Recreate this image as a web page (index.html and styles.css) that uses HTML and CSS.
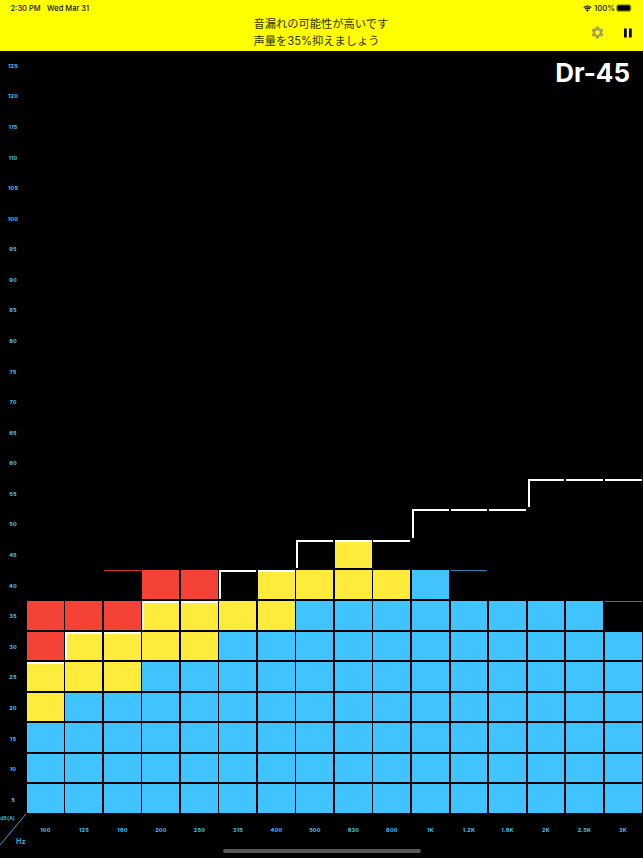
FILE: index.html
```html
<!DOCTYPE html>
<html lang="ja">
<head>
    <meta charset="UTF-8">
    <meta name="viewport" content="width=device-width, initial-scale=1.0">
    <title>Dr-45</title>
    <link rel="stylesheet" href="styles.css">
</head>
<body>
    <header class="header">
        <div class="status-bar">
            <span class="time">2:30 PM</span>
            <span class="date">Wed Mar 31</span>
            <svg class="wifi" viewBox="0 0 18 14">
                <path d="M1.5 5.2a11 11 0 0 1 15 0M4.2 8.3a7 7 0 0 1 9.6 0" fill="none" stroke="#111" stroke-width="2.5"/>
                <path d="M9 13.5L6.2 10.6a4 4 0 0 1 5.6 0z" fill="#111"/>
            </svg>
            <span class="percent">100%</span>
            <svg class="battery" viewBox="0 0 17 8">
                <rect x="0.5" y="0.5" width="14.5" height="7" rx="2" fill="none" stroke="#777700" stroke-width="0.6"/>
                <rect x="1.2" y="1.2" width="13.1" height="5.6" rx="1.2" fill="#000"/>
                <path d="M15.8 2.8q1 1.2 0 2.4z" fill="#666600"/>
            </svg>
        </div>
        <p class="message">音漏れの可能性が高いです<br>声量を35%抑えましょう</p>
        <div class="tools">
            <svg class="gear" viewBox="0 0 24 24">
                <path fill="#a3a05c" fill-rule="evenodd" d="M19.14 12.94c.04-.3.06-.61.06-.94s-.02-.64-.07-.94l2.03-1.58a.49.49 0 0 0 .12-.61l-1.92-3.32a.49.49 0 0 0-.59-.22l-2.39.96a7 7 0 0 0-1.62-.94l-.36-2.54a.48.48 0 0 0-.48-.41h-3.84a.48.48 0 0 0-.47.41l-.36 2.54a7.3 7.3 0 0 0-1.62.94l-2.39-.96a.48.48 0 0 0-.59.22L2.74 8.87a.48.48 0 0 0 .12.61l2.03 1.58c-.05.3-.09.63-.09.94s.02.64.07.94l-2.03 1.58a.49.49 0 0 0-.12.61l1.92 3.32c.12.22.37.29.59.22l2.39-.96c.5.38 1.03.7 1.62.94l.36 2.54c.05.24.24.41.48.41h3.84c.24 0 .44-.17.47-.41l.36-2.54a7 7 0 0 0 1.62-.94l2.39.96c.22.08.47 0 .59-.22l1.92-3.32a.48.48 0 0 0-.12-.61zM12 15.8a3.8 3.8 0 1 1 0-7.6 3.8 3.8 0 0 1 0 7.6z"/>
            </svg>
            <svg class="pause" viewBox="0 0 8 10">
                <path d="M0 0.5h2.7v9h-2.7zM5 0.5h2.7v9h-2.7z" fill="#000"/>
            </svg>
        </div>
    </header>

    <main class="meter">
        <div class="levels" id="levels"></div>
        <div class="chart" id="chart"></div>
        <div class="corner">
            <svg class="slash" viewBox="0 0 26 32">
                <path d="M0 31L26 0" stroke="#3fa0dc" stroke-width="1"/>
            </svg>
            <span class="db">dB(A)</span>
            <span class="hz">Hz</span>
        </div>
        <div class="bands" id="bands"></div>
        <div class="rating">Dr-45</div>
    </main>
    <div class="home-bar"></div>

    <script src="script.js"></script>
</body>
</html>
```
FILE: styles.css
```css
body {
    margin: 0;
    height: 858px;
    display: flex;
    flex-direction: column;
    position: relative;
    overflow: hidden;
    background-color: #000;
    font-family: Inter, "Noto Sans CJK JP", sans-serif;
}

.header {
    height: 50.5px;
    background-color: #ffff00;
    color: #111;
    position: relative;
}
.status-bar {
    display: flex;
    align-items: center;
    height: 16px;
    padding: 0 10px 0 10.5px;
    font-size: 7.5px;
    font-weight: 500;
    white-space: nowrap;
}
.date {
    margin-left: 6.5px;
}
.wifi {
    width: 9px;
    height: 7px;
    margin-left: auto;
}
.percent {
    margin: 0 1px 0 2px;
    font-size: 7.8px;
}
.battery {
    width: 17px;
    height: 8px;
}
.message {
    margin: 0 0 0 253.5px;
    font-size: 11.25px;
    line-height: 17.4px;
    color: #333300;
}
.tools {
    position: absolute;
    right: 11px;
    top: 25px;
    display: flex;
    align-items: center;
    gap: 19px;
}
.gear {
    width: 15px;
    height: 15px;
}
.pause {
    width: 8px;
    height: 10px;
}

.meter {
    flex: 1;
    display: grid;
    grid-template-columns: 26.7px 616.5px;
    grid-template-rows: 764.5px 1fr;
    position: relative;
    color: #43b4e8;
    font-size: 5.4px;
    font-weight: 800;
    letter-spacing: 0.2px;
}
.levels {
    display: grid;
    grid-template-rows: repeat(25, 1fr);
    justify-items: center;
    align-items: center;
    padding-right: 0.7px;
}
.chart {
    display: grid;
    grid-template-columns: repeat(16, 1fr);
    grid-template-rows: repeat(25, 1fr);
}
.cell {
    margin: 0 1.7px 2px 0;
    box-sizing: border-box;
}
.blue {
    background-color: #40c4ff;
}
.yellow {
    background-color: #ffeb3b;
}
.red {
    background-color: #f44336;
}
.peak-blue {
    border-top: 1px solid #2f83b8;
}
.peak-red {
    border-top: 1px solid #c83a30;
}
.limit {
    border-top: 2px solid #fff;
}
.step {
    border-left: 2px solid #fff;
}
.bands {
    display: grid;
    grid-template-columns: repeat(16, 1fr);
    justify-items: center;
    align-items: start;
    padding: 12px 1px 0 0;
    margin-left: -0.5px;
}
.corner {
    position: relative;
}
.slash {
    position: absolute;
    left: 0;
    top: -1px;
    width: 26px;
    height: 32px;
}
.db {
    position: absolute;
    left: 0;
    top: 0;
    font-weight: 600;
    letter-spacing: 0;
}
.hz {
    position: absolute;
    left: 16px;
    top: 22px;
    font-size: 7.2px;
    font-weight: 600;
}
.rating {
    position: absolute;
    right: 13px;
    top: 6px;
    font-size: 26px;
    line-height: 31px;
    letter-spacing: 0;
    font-weight: 700;
    color: #fff;
}
.home-bar {
    position: absolute;
    left: 222.5px;
    bottom: 5px;
    width: 198px;
    height: 4px;
    border-radius: 2px;
    background-color: #585858;
}
```
FILE: script.js
```js
const ROWS = 25;

// blue / yellow / red: number of cells from the bottom, limit: row of the Dr curve, peak: held row
const bands = [
    { hz: '100', blue: 3, yellow: 2, red: 2, limit: 5 },
    { hz: '125', blue: 4, yellow: 2, red: 1, limit: 6 },
    { hz: '160', blue: 4, yellow: 2, red: 1, limit: 6, peak: 8 },
    { hz: '200', blue: 5, yellow: 2, red: 1, limit: 7 },
    { hz: '250', blue: 5, yellow: 2, red: 1, limit: 7 },
    { hz: '315', blue: 6, yellow: 1, red: 0, limit: 8 },
    { hz: '400', blue: 6, yellow: 2, red: 0, limit: 8 },
    { hz: '500', blue: 7, yellow: 1, red: 0, limit: 9 },
    { hz: '630', blue: 7, yellow: 2, red: 0, limit: 9 },
    { hz: '800', blue: 7, yellow: 1, red: 0, limit: 9 },
    { hz: '1K', blue: 8, yellow: 0, red: 0, limit: 10 },
    { hz: '1.2K', blue: 7, yellow: 0, red: 0, limit: 10, peak: 8 },
    { hz: '1.6K', blue: 7, yellow: 0, red: 0, limit: 10 },
    { hz: '2K', blue: 7, yellow: 0, red: 0, limit: 11 },
    { hz: '2.5K', blue: 7, yellow: 0, red: 0, limit: 11 },
    { hz: '3K', blue: 6, yellow: 0, red: 0, limit: 11, peak: 7 }
];

function addLabel(id, text) {
    const label = document.createElement('span');
    label.textContent = text;
    document.getElementById(id).appendChild(label);
}

for (let row = ROWS; row > 0; row--) {
    addLabel('levels', row * 5);
    bands.forEach((band, i) => {
        const cell = document.createElement('div');
        cell.classList.add('cell');
        if (row <= band.blue) {
            cell.classList.add('blue');
        } else if (row <= band.blue + band.yellow) {
            cell.classList.add('yellow');
        } else if (row <= band.blue + band.yellow + band.red) {
            cell.classList.add('red');
        }
        if (row === band.peak) {
            cell.classList.add(row > band.limit ? 'peak-red' : 'peak-blue');
        }
        if (row === band.limit) {
            cell.classList.add('limit');
            if (i > 0 && bands[i - 1].limit < row) {
                cell.classList.add('step');
            }
        }
        document.getElementById('chart').appendChild(cell);
    });
}

bands.forEach(band => addLabel('bands', band.hz));
```
